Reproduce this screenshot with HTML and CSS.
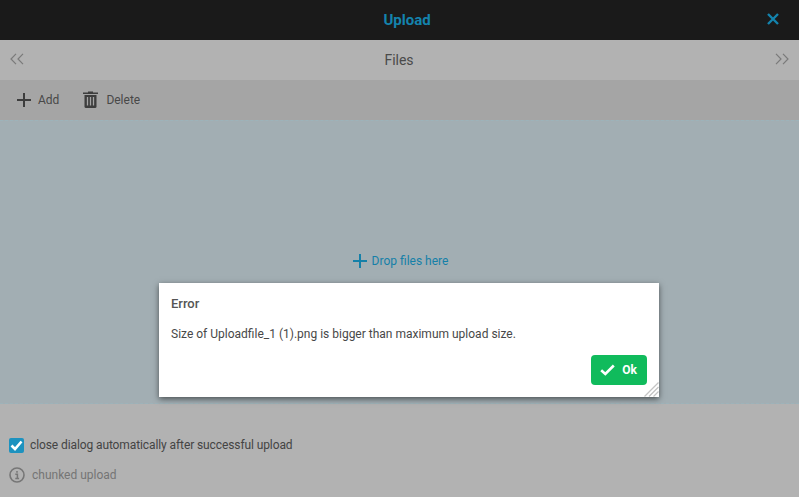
FILE: index.html
```html
<!DOCTYPE html>
<html lang="en">
<head>
<meta charset="utf-8">
<title>Upload</title>
<link rel="stylesheet" href="styles.css">
</head>
<body>
<div class="app">
  <header class="title-bar">
    <h1 class="title">Upload</h1>
    <button class="close" aria-label="Close">
      <svg width="12" height="12" viewBox="0 0 12 12"><path d="M1 1L11 11M11 1L1 11" fill="none" stroke="#1483ad" stroke-width="2.4"/></svg>
    </button>
  </header>
  <div class="nav-bar">
    <svg class="chev" width="14" height="12" viewBox="0 0 14 12"><path d="M6 .8L1 6l5 5.2M13 .8L8 6l5 5.2" fill="none" stroke="#7a7a7a" stroke-width="1.2"/></svg>
    <span class="nav-title">Files</span>
    <svg class="chev" width="14" height="12" viewBox="0 0 14 12"><path d="M1 .8L6 6l-5 5.2M8 .8L13 6l-5 5.2" fill="none" stroke="#7a7a7a" stroke-width="1.2"/></svg>
  </div>
  <div class="toolbar">
    <span class="tool">
      <svg width="14" height="14" viewBox="0 0 14 14"><path d="M7 0v14M0 7h14" fill="none" stroke="#3d3d3d" stroke-width="2"/></svg>
      Add
    </span>
    <span class="tool">
      <svg class="trash" width="15" height="17" viewBox="0 0 15 17"><path d="M5 1.500V.5h5v1h5V3H0V1.500z" fill="#3d3d3d"/><path d="M1.500 4h12v11.500a1.500 1.500 0 0 1-1.500 1.500H3a1.500 1.500 0 0 1-1.500-1.500z" fill="#3d3d3d"/><path d="M4.500 6v8.500M7.500 6v8.500M10.500 6v8.500" stroke="#a5a5a5" stroke-width="1.300" fill="none"/></svg>
      Delete
    </span>
  </div>
  <section class="drop-zone">
    <div class="drop-hint">
      <svg width="14" height="14" viewBox="0 0 14 14"><path d="M7 0v14M0 7h14" fill="none" stroke="#1580a8" stroke-width="2"/></svg>
      Drop files here
    </div>
  </section>
  <footer class="options">
    <label class="option">
      <span class="check"><svg width="13" height="11" viewBox="0 0 13 11"><path d="M1.500 5.500L5 9l6.500-7.500" fill="none" stroke="#fff" stroke-width="2.600"/></svg></span>
      <span class="check-text">close dialog automatically after successful upload</span>
    </label>
    <div class="option muted">
      <svg width="16" height="16" viewBox="0 0 16 16"><circle cx="8" cy="8" r="7" fill="none" stroke="#767676" stroke-width="1.600"/><path d="M8 4v1.800M6.300 7.300H8.400v4.200M6.300 11.500h3.800" fill="none" stroke="#767676" stroke-width="1.500"/></svg>
      <span class="muted-text">chunked upload</span>
    </div>
  </footer>
  <div class="dialog" role="alertdialog">
    <div class="dialog-title">Error</div>
    <div class="dialog-text">Size of Uploadfile_1 (1).png is bigger than maximum upload size.</div>
    <div class="dialog-actions">
      <button class="ok">
        <svg width="15" height="12" viewBox="0 0 15 12"><path d="M1.200 6.300L5.300 10 13.800 1.500" fill="none" stroke="#fff" stroke-width="2.600"/></svg>
        <span>Ok</span>
      </button>
    </div>
    <svg class="grip" width="15" height="15" viewBox="0 0 15 15"><path d="M14.500 .5L.5 14.500M14.500 5L5 14.500M14.500 9.500L9.500 14.500" stroke="#c4c4c4" stroke-width="1.300" fill="none"/></svg>
  </div>
</div>
</body>
</html>
```
FILE: styles.css
```css
* { box-sizing: border-box; }
html, body { margin: 0; height: 100%; }
body { font-family: Roboto, "Liberation Sans", sans-serif; font-size: 12px; color: #444; overflow: hidden; }
.app { position: relative; width: 799px; height: 497px; display: flex; flex-direction: column; background: #b2b2b2; }
.title-bar { height: 40px; flex: none; background: #1a1a1a; display: flex; align-items: center; justify-content: center; padding-left: 15px; position: relative; }
.title { margin: 0; font-size: 15px; font-weight: 700; color: #1483ad; }
.close { position: absolute; right: 20px; top: 13px; width: 12px; height: 12px; padding: 0; border: 0; background: none; display: flex; }
.nav-bar { height: 40px; flex: none; background: #b2b2b2; display: flex; align-items: center; justify-content: space-between; padding: 0 10px; }
.chev { margin-top: -2px; }
.nav-title { font-size: 14px; color: #4a4a4a; margin-left: -1px; }
.toolbar { height: 40px; flex: none; background: #a5a5a5; display: flex; align-items: center; gap: 24px; padding: 0 16px 1px 17px; }
.tool { display: flex; align-items: center; gap: 7px; color: #484848; }
.trash { margin-right: 1px; }
.drop-zone { height: 284px; flex: none; background: #a2aeb3; border-top: 1px dashed #9db3ba; border-bottom: 1px dashed #9db3ba; padding: 132px 0 0 2px; display: flex; justify-content: center; }
.drop-hint { display: flex; align-items: center; gap: 5px; height: 16px; color: #1580a8; }
.options { flex: 1; padding: 33px 9px 0; display: flex; flex-direction: column; gap: 14px; }
.option { display: flex; align-items: center; height: 16px; gap: 6px; color: #444; }
.check { width: 15px; height: 15px; background: #1d92bf; border-radius: 2px; display: flex; align-items: center; justify-content: center; }
.check-text { letter-spacing: -0.1px; }
.muted { gap: 7px; }
.muted-text { color: #757575; }
.dialog { position: absolute; left: 159px; top: 283px; width: 500px; height: 114px; background: #fff; box-shadow: 0 2px 6px rgba(0,0,0,.55); padding: 13px 12px 0; display: flex; flex-direction: column; }
.dialog-title { font-size: 13px; font-weight: 500; color: #555; line-height: 16px; }
.dialog-text { margin-top: 14px; color: #484848; line-height: 16px; }
.dialog-actions { display: flex; justify-content: flex-end; margin-top: 13px; }
.ok { width: 56px; height: 30px; border: 0; border-radius: 4px; background: #10bb5c; color: #fff; font: 700 12px Roboto, sans-serif; display: flex; align-items: center; justify-content: center; gap: 7px; padding: 0 1px 1px 0; }
.grip { position: absolute; right: 0; bottom: 0; }
```
